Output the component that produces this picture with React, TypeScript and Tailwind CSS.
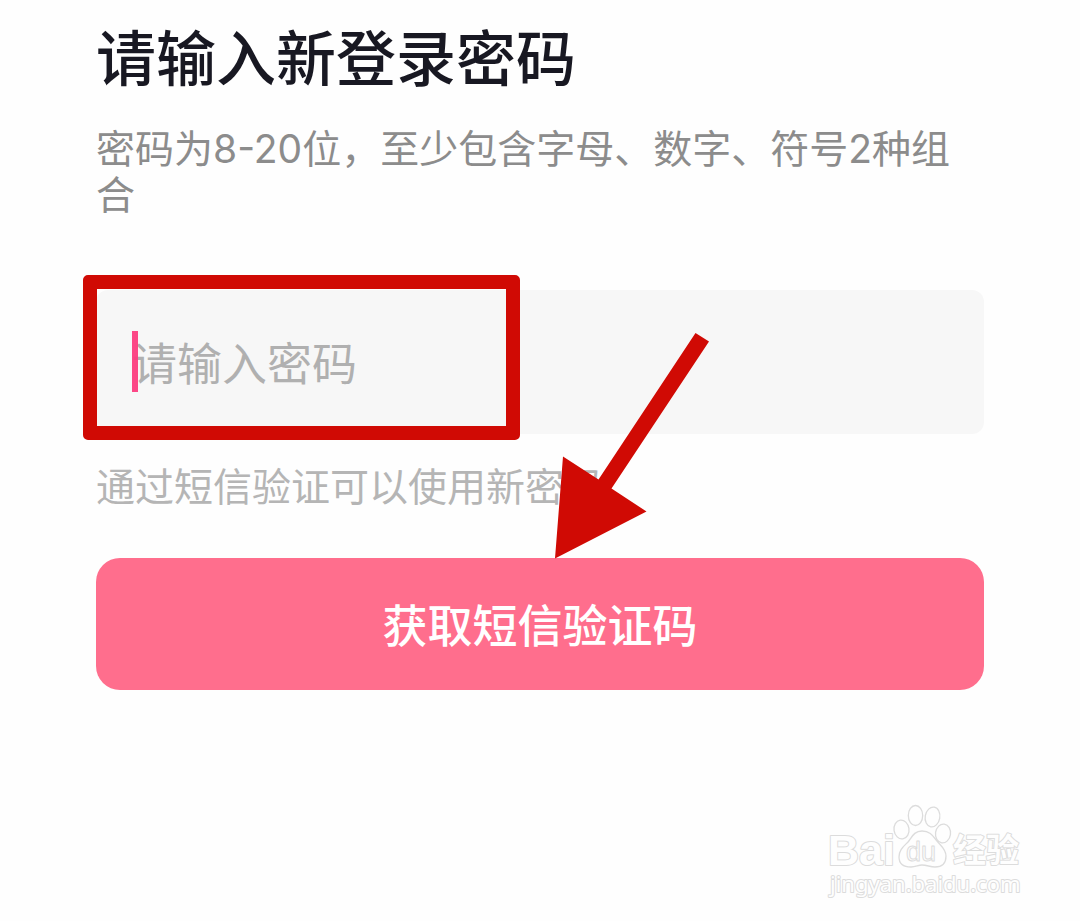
import React from 'react';

function Frame() {
  return (
    <span
      aria-hidden="true"
      className="pointer-events-none absolute -left-[13px] -top-[15px] h-[165px] w-[437px] rounded-[5px] border-[14px] border-[#d00a04]"
    />
  );
}

function Arrow() {
  return (
    <svg
      aria-hidden="true"
      className="pointer-events-none absolute left-[459px] top-[42px] z-10"
      width="156"
      height="227"
      viewBox="555 332 156 227"
    >
      <path d="M555 558.500L563 456.500L598.500 479.500L695.500 333L709 341.500L611.500 488.500L646.500 511.500Z" fill="#d00a04" />
    </svg>
  );
}

function Watermark() {
  return (
    <svg
      role="img"
      aria-label="Baidu 经验"
      className="mr-[54px]"
      width="206"
      height="100"
      viewBox="820 800 206 100"
      fill="#fefefe"
      stroke="#dcdcdc"
      strokeWidth="2"
      strokeLinejoin="round"
    >
      <text x="828" y="865" fontSize="43" fontWeight="700" fontFamily="'Liberation Sans', sans-serif" style={{ paintOrder: 'stroke' }}>Bai</text>
      <g strokeWidth="1.300">
        <ellipse cx="901.500" cy="829.500" rx="7.500" ry="9.500" transform="rotate(-8 901.500 829.500)" />
        <ellipse cx="915.500" cy="815.500" rx="7.200" ry="10" />
        <ellipse cx="932.500" cy="817" rx="7.300" ry="10" transform="rotate(10 932.500 817)" />
        <ellipse cx="943" cy="833.500" rx="7.500" ry="9.500" transform="rotate(8 943 833.500)" />
        <path d="M922 831C914 831 912 837 908 842C903 847 899 850 899 857C899 864 904 867 911 867C916 867 918 865 922 865C927 865 930 867 935 867C942 867 946 863 946 856C946 849 941 846 937 841C933 836 930 831 922 831Z" />
      </g>
      <text x="906" y="861" fontSize="27" strokeWidth="1" fontFamily="'Liberation Sans', sans-serif">du</text>
      <text x="953" y="862" fontSize="33" fontWeight="700" fontFamily="'Noto Sans CJK SC', sans-serif" style={{ paintOrder: 'stroke' }}>经验</text>
      <text x="830" y="892" fontSize="22" strokeWidth="2" fontFamily="'Noto Sans', sans-serif" style={{ paintOrder: 'stroke' }}>jingyan.baidu.com</text>
    </svg>
  );
}

export default function App() {
  return (
    <div className="flex min-h-screen flex-col bg-[#fefefe] pt-5 font-['Inter','Noto_Sans_CJK_SC',sans-serif]">
      <main className="px-24">
        <h1 className="font-['Noto_Sans_CJK_SC',sans-serif] text-[60px] font-medium leading-[70px] text-[#181822]">
          请输入新登录密码
        </h1>
        <p className="mt-9 text-[39px] leading-[46px] text-[#8c8c8c]">
          密码为8-20位，至少包含字母、数字、符号2种组合
        </p>
        <form onSubmit={(event) => event.preventDefault()}>
          <div className="relative mt-[72px]">
            <input
              type="password"
              aria-label="请输入密码"
              aria-describedby="hint"
              placeholder="请输入密码"
              className="block h-36 w-full rounded-xl bg-[#f7f7f7] px-9 pt-1 text-[45px] outline-none placeholder:text-[#b0b0b0] placeholder:opacity-100"
            />
            <span aria-hidden="true" className="absolute left-9 top-[41px] h-[61px] w-[6px] bg-[#fc3d7f]/95" />
            <Frame />
            <Arrow />
          </div>
          <p id="hint" className="mt-[30px] text-[39px] leading-[46px] text-[#b5b5b5]">
            通过短信验证可以使用新密码
          </p>
          <button
            type="submit"
            className="mt-12 block h-[132px] w-full rounded-3xl bg-[#ff6e8d] font-['Noto_Sans_CJK_SC',sans-serif] text-[45px] font-medium text-white"
          >
            获取短信验证码
          </button>
        </form>
      </main>
      <footer className="mt-auto flex justify-end pb-[21px]">
        <Watermark />
      </footer>
    </div>
  );
}
